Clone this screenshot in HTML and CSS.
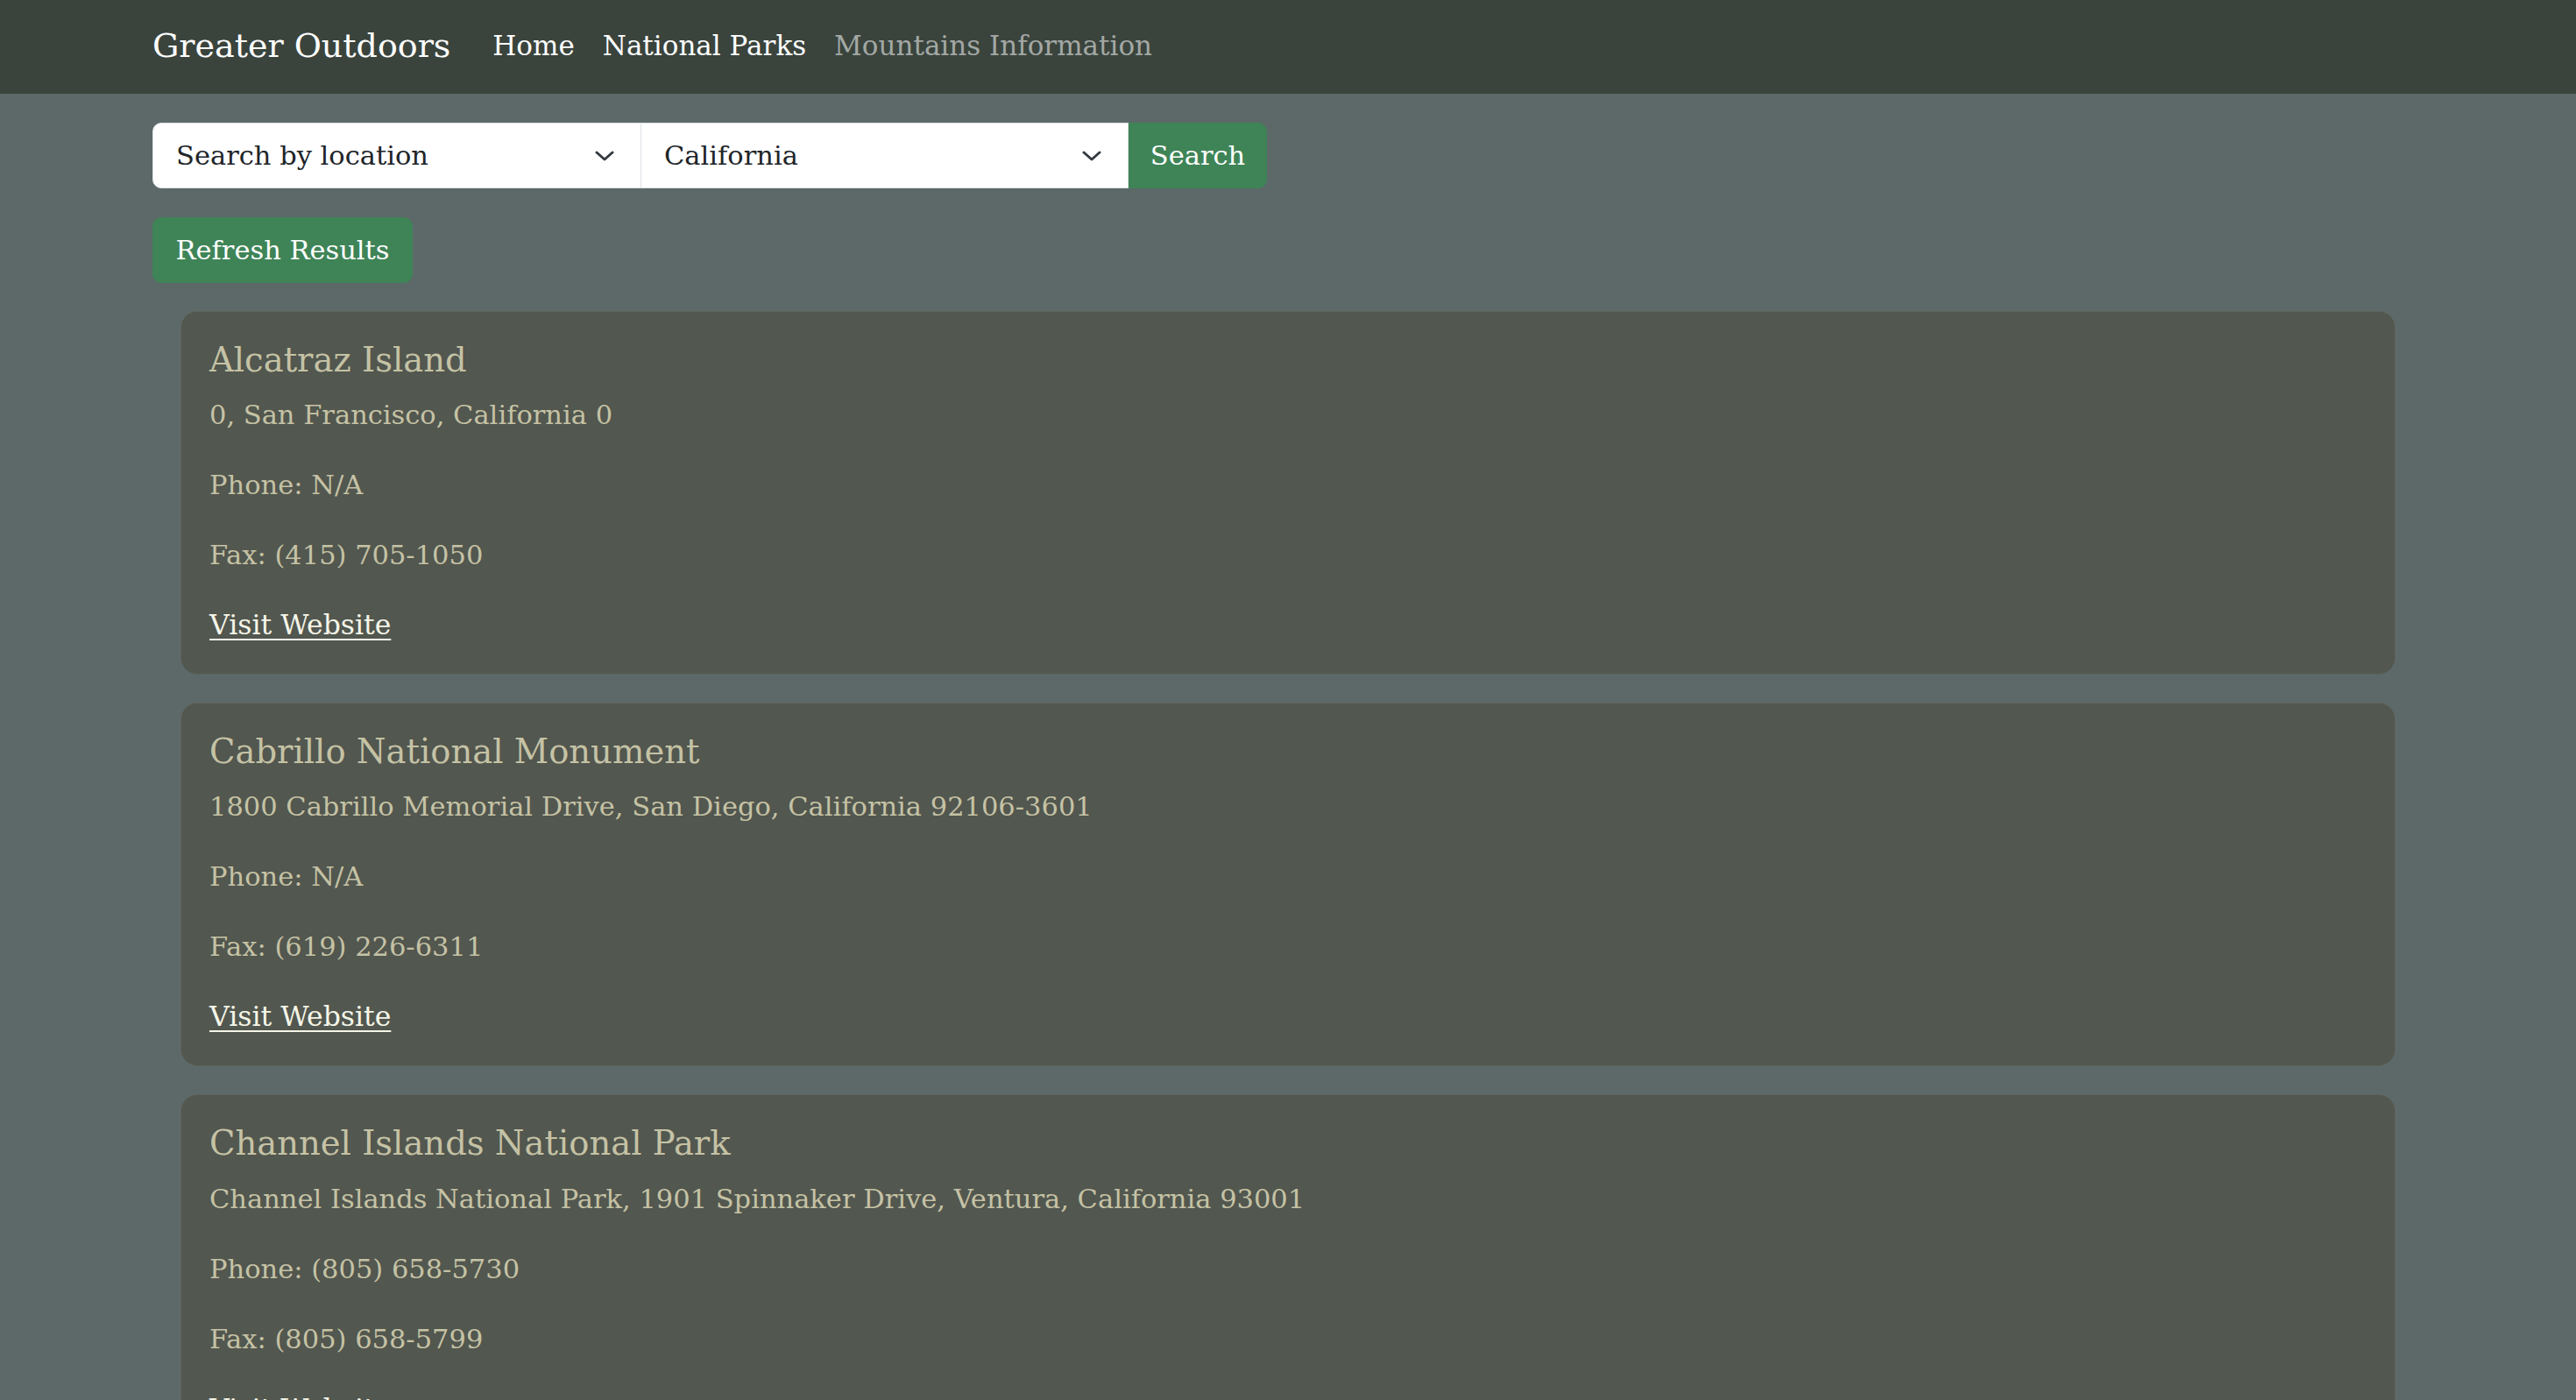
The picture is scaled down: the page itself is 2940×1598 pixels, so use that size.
FILE: index.html
```html
<!DOCTYPE html>
<html lang="en">
<head>
<meta charset="utf-8">
<title>Greater Outdoors - National Parks</title>
<link rel="stylesheet" href="styles.css">
</head>
<body>
<nav class="navbar">
  <a class="brand" href="#">Greater Outdoors</a>
  <ul class="nav-links">
    <li><a class="nav-link" href="#">Home</a></li>
    <li><a class="nav-link" href="#">National Parks</a></li>
    <li><a class="nav-link muted" href="#">Mountains Information</a></li>
  </ul>
</nav>
<main class="container">
  <form class="search-group">
    <div class="select first">
      <span>Search by location</span>
      <svg class="chev" width="22" height="12" viewBox="0 0 22 12"><polyline points="2,2 11,10 20,2" fill="none" stroke="#343a40" stroke-width="3" stroke-linecap="round" stroke-linejoin="round"/></svg>
    </div>
    <div class="select">
      <span>California</span>
      <svg class="chev" width="22" height="12" viewBox="0 0 22 12"><polyline points="2,2 11,10 20,2" fill="none" stroke="#343a40" stroke-width="3" stroke-linecap="round" stroke-linejoin="round"/></svg>
    </div>
    <button type="button" class="btn search-btn">Search</button>
  </form>
  <div class="refresh-row">
    <button type="button" class="btn">Refresh Results</button>
  </div>
  <section class="results">
    <article class="card">
      <h5 class="card-title">Alcatraz Island</h5>
      <p>0, San Francisco, California 0</p>
      <p>Phone: N/A</p>
      <p>Fax: (415) 705-1050</p>
      <p><a class="site-link" href="#">Visit Website</a></p>
    </article>
    <article class="card">
      <h5 class="card-title">Cabrillo National Monument</h5>
      <p>1800 Cabrillo Memorial Drive, San Diego, California 92106-3601</p>
      <p>Phone: N/A</p>
      <p>Fax: (619) 226-6311</p>
      <p><a class="site-link" href="#">Visit Website</a></p>
    </article>
    <article class="card">
      <h5 class="card-title">Channel Islands National Park</h5>
      <p>Channel Islands National Park, 1901 Spinnaker Drive, Ventura, California 93001</p>
      <p>Phone: (805) 658-5730</p>
      <p>Fax: (805) 658-5799</p>
      <p><a class="site-link" href="#">Visit Website</a></p>
    </article>
  </section>
</main>
</body>
</html>
```

FILE: styles.css
```css
* { box-sizing: border-box; }

html, body {
  margin: 0;
  padding: 0;
}

body {
  background: #5d6969;
  font-family: "DejaVu Serif", "Liberation Serif", serif;
  font-size: 30.5px;
  line-height: 1.5;
  color: #c5c2a5;
}

.navbar {
  height: 107px;
  background: #3a443d;
  display: flex;
  align-items: center;
  padding: 0 174px;
}

.brand {
  color: #ffffff;
  text-decoration: none;
  font-size: 38px;
  line-height: 1.2;
  margin-right: 32px;
  padding-bottom: 2px;
}

.nav-links {
  list-style: none;
  display: flex;
  margin: 0;
  padding: 0;
}

.nav-link {
  display: block;
  padding: 0 16px 3px;
  color: #ffffff;
  text-decoration: none;
  font-size: 31px;
  line-height: 1.5;
}

.nav-link.muted {
  color: #a3a8a4;
}

.container {
  padding: 33px 174px 0;
}

.search-group {
  display: flex;
  margin: 0;
  height: 75px;
}

.select {
  width: 557px;
  height: 75px;
  background: #ffffff;
  border: 1px solid #dee2e6;
  display: flex;
  align-items: center;
  justify-content: space-between;
  padding: 0 30px 0 26px;
  color: #212529;
  margin-left: -1px;
}

.select.first {
  width: 558px;
  margin-left: 0;
  border-radius: 10px 0 0 10px;
}

.chev {
  display: block;
}

.btn {
  font-family: inherit;
  font-size: 30.5px;
  line-height: 1.5;
  color: #ffffff;
  background: #3e8457;
  border: 1px solid #3e8457;
  border-radius: 10px;
  padding: 14px 26px;
  height: 75px;
}

.search-btn {
  width: 158px;
  padding: 0;
  border-radius: 0 10px 10px 0;
}

.refresh-row {
  margin-top: 33px;
}

.refresh-row .btn {
  width: 297px;
  padding: 0;
}

.results {
  padding: 32px 32px 0;
  display: flex;
  flex-direction: column;
  gap: 32px;
}

.card {
  background: #52574f;
  border: 1px solid #5f645c;
  border-radius: 19px;
  padding: 32px 32px 31px;
}

.card-title {
  margin: 0 0 16px;
  font-size: 38.5px;
  font-weight: normal;
  line-height: 1.2;
  color: #c5c2a5;
}

.card p {
  margin: 0 0 32px;
  height: 48px;
  line-height: 48px;
}

.card p:last-child {
  margin-bottom: 0;
}

.site-link {
  color: #f5f5e8;
  font-size: 31.5px;
  line-height: 1;
  text-decoration: underline;
  text-underline-offset: 5px;
  text-decoration-thickness: 2px;
}
```
